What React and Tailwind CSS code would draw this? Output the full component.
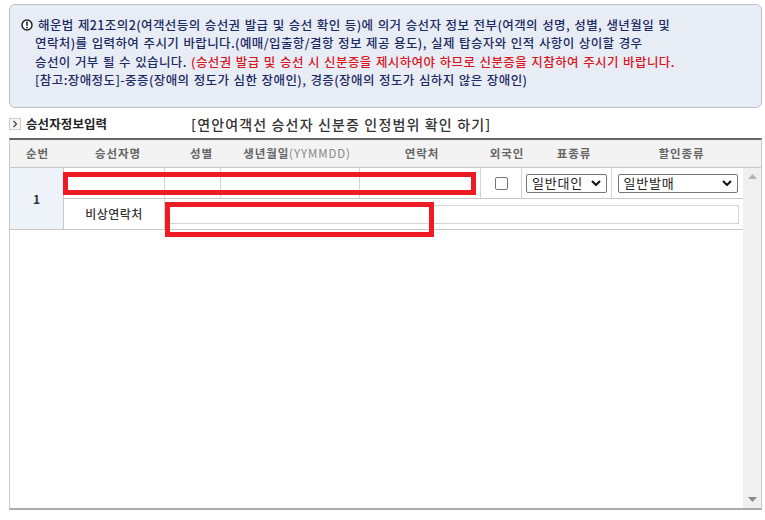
const F = '[font-family:"Noto_Sans_CJK_KR","Liberation_Sans",sans-serif]';

const columns = [
  { label: "순번", w: "w-[55px]" },
  { label: "승선자명", w: "w-[106px]" },
  { label: "성별", w: "w-[61px]" },
  { label: "생년월일", w: "w-[130px]", extra: "(YYMMDD)" },
  { label: "연락처", w: "w-[120px]" },
  { label: "외국인", w: "w-[50px]" },
  { label: "표종류", w: "w-[84px]" },
  { label: "할인종류", w: "w-[131px]" },
];

function Select({ w, text }) {
  return (
    <div className={`${w} h-[19px] border border-[#767676] rounded-[2px] bg-white flex items-center justify-between pl-[5px] pr-[5px] text-[13px] tracking-[0.8px] text-[#222]`}>
      <span>{text}</span>
      <svg width="10" height="6" viewBox="0 0 10 6"><path d="M1 1l4 4 4-4" fill="none" stroke="#111" strokeWidth="2" /></svg>
    </div>
  );
}

export default function App() {
  return (
    <div className={`${F} relative w-[765px] h-[520px] bg-white overflow-hidden pt-[4px] pl-[9px] pr-[3px]`}>
      <div className="w-[753px] h-[104px] rounded-[6px] border border-[#b9c2cc] bg-[#e8edf5] pt-[11px] pl-[11px] text-[12.5px] leading-[18.4px] font-medium text-[#1b2a63] tracking-[0.4px] [word-spacing:1px]">
        <div className="flex items-center gap-[5px] whitespace-nowrap">
          <svg width="12" height="12" viewBox="0 0 12 12" className="shrink-0">
            <circle cx="6" cy="6" r="5" fill="#fff" stroke="#222" strokeWidth="1.5" />
            <rect x="5.2" y="2.6" width="1.6" height="4.2" fill="#222" />
            <rect x="5.2" y="7.8" width="1.6" height="1.6" fill="#222" />
          </svg>
          <span>해운법 제21조의2(여객선등의 승선권 발급 및 승선 확인 등)에 의거 승선자 정보 전부(여객의 성명, 성별, 생년월일 및</span>
        </div>
        <div className="whitespace-nowrap pl-[14px]">연락처)를 입력하여 주시기 바랍니다.(예매/입출항/결항 정보 제공 용도), 실제 탑승자와 인적 사항이 상이할 경우</div>
        <div className="whitespace-nowrap pl-[14px]">
          승선이 거부 될 수 있습니다. <span className="text-[#d8141c]">(승선권 발급 및 승선 시 신분증을 제시하여야 하므로 신분증을 지참하여 주시기 바랍니다.</span>
        </div>
        <div className="whitespace-nowrap pl-[14px]">[참고:장애정도]-중증(장애의 정도가 심한 장애인), 경증(장애의 정도가 심하지 않은 장애인)</div>
      </div>

      <div className="flex items-center h-[28px] mt-[2px]">
        <div className="w-[12px] h-[12px] border border-[#ccc] bg-[#f4f4f4] flex items-center justify-center">
          <svg width="6" height="8" viewBox="0 0 6 8"><path d="M1.5 1l3 3-3 3" fill="none" stroke="#444" strokeWidth="1.2" /></svg>
        </div>
        <span className="ml-[5px] w-[165px] text-[12.5px] font-semibold text-[#222] tracking-[0.1px] whitespace-nowrap">승선자정보입력</span>
        <span className="text-[14px] font-medium text-[#333] tracking-[1.15px] whitespace-nowrap">[연안여객선 승선자 신분증 인정범위 확인 하기]</span>
      </div>

      <div className="w-[753px] h-[372px] border-t-2 border-t-[#666] border-b-2 border-b-[#aaa] border-l border-l-[#c8c8c8] border-r border-r-[#c8c8c8] flex flex-col">
        <div className="flex h-[28px] bg-[#f3f3f3] border-b border-[#c8c8c8] text-[11.5px] font-semibold text-[#666] tracking-[0.9px] shrink-0 pt-[1px]">
          {columns.map((c) => (
            <div key={c.label} className={`${c.w} shrink-0 flex items-center justify-center whitespace-nowrap`}>
              {c.label}
              {c.extra && <span className="font-normal text-[#888]">{c.extra}</span>}
            </div>
          ))}
        </div>

        <div className="flex flex-1 min-h-0">
          <div className="w-[733px] shrink-0">
            <div className="flex h-[62px] border-b border-[#c8c8c8]">
              <div className="w-[54px] shrink-0 bg-[#eef3fa] border-r border-[#c8c8c8] flex items-center justify-center text-[12px] font-bold text-[#333]">1</div>
              <div className="flex-1 flex flex-col">
                <div className="flex h-[31px] border-b border-[#c8c8c8]">
                  <div className="w-[101px] shrink-0 border-r border-[#d4d4d4]" />
                  <div className="w-[56px] shrink-0 border-r border-[#d4d4d4]" />
                  <div className="w-[139px] shrink-0 border-r border-[#d4d4d4]" />
                  <div className="w-[121px] shrink-0 border-r border-[#d4d4d4]" />
                  <div className="w-[41px] shrink-0 border-r border-[#d4d4d4] flex items-center justify-center">
                    <div className="w-[13px] h-[13px] rounded-[2px] border border-[#767676] bg-white" />
                  </div>
                  <div className="w-[90px] shrink-0 border-r border-[#d4d4d4] flex items-center justify-center">
                    <Select w="w-[81px]" text="일반대인" />
                  </div>
                  <div className="w-[131px] shrink-0 flex items-center justify-center">
                    <Select w="w-[120px]" text="일반발매" />
                  </div>
                </div>
                <div className="flex flex-1">
                  <div className="w-[101px] shrink-0 border-r border-[#d4d4d4] flex items-center justify-center text-[12px] font-medium text-[#333] tracking-[0.5px]">비상연락처</div>
                  <div className="flex-1 flex items-center pl-[3px] pr-[4px]">
                    <div className="w-full h-[19px] border border-[#d4d4d4] bg-white" />
                  </div>
                </div>
              </div>
            </div>
          </div>
          <div className="flex-1 bg-[#f0f0f0] flex flex-col items-center justify-between py-[6px]">
            <svg width="9" height="5" viewBox="0 0 9 5"><path d="M4.5 0l4.5 5H0z" fill="#b5b5b5" /></svg>
            <svg width="9" height="5" viewBox="0 0 9 5"><path d="M0 0h9L4.5 5z" fill="#8a8a8a" /></svg>
          </div>
        </div>
      </div>

      <div className="absolute left-[63px] top-[172px] w-[413px] h-[23px] border-[5px] border-[#ed1c24]" />
      <div className="absolute left-[165px] top-[202px] w-[269px] h-[35px] border-[5px] border-[#ed1c24]" />
    </div>
  );
}
